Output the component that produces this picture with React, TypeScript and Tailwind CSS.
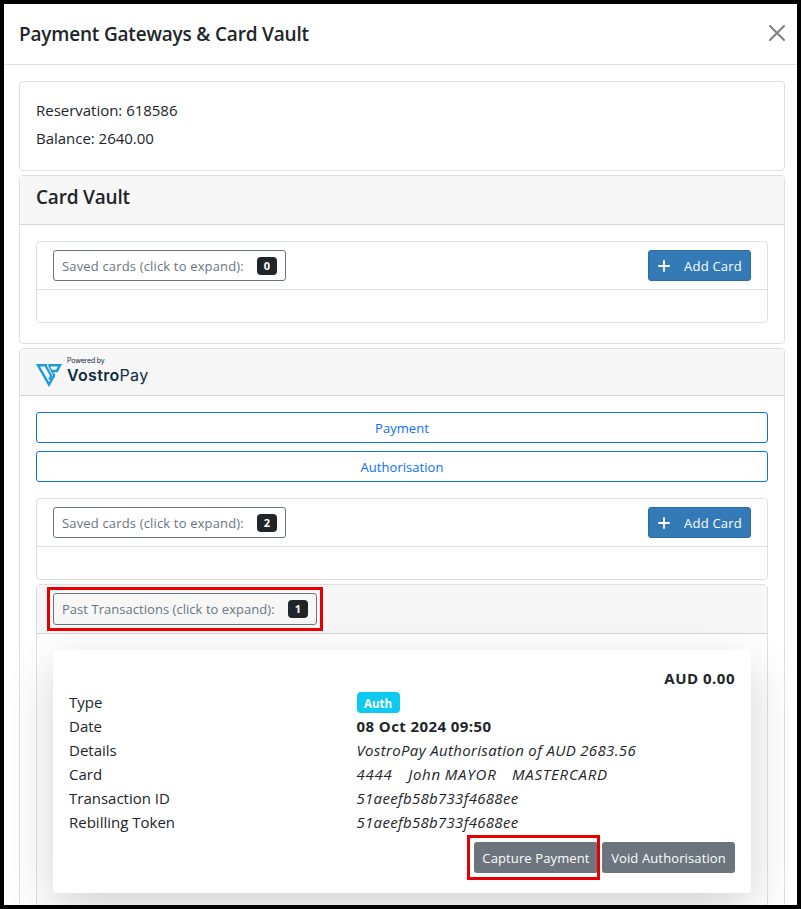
import { type ReactNode } from 'react';
import { clsx } from 'clsx';

const details = [
  { label: 'Date', value: '08 Oct 2024 09:50', style: 'font-bold tracking-[0.42px]' },
  { label: 'Details', value: 'VostroPay Authorisation of AUD 2683.56', style: 'italic tracking-[0.34px]' },
  { label: 'Card', value: '4444\u00a0\u00a0\u00a0 John MAYOR\u00a0\u00a0\u00a0 MASTERCARD', style: 'italic tracking-[0.75px] [word-spacing:-0.75px]' },
  { label: 'Transaction ID', value: '51aeefb58b733f4688ee', style: 'italic tracking-[0.3px]' },
  { label: 'Rebilling Token', value: '51aeefb58b733f4688ee', style: 'italic tracking-[0.3px]' },
];

function ExpandButton({ label, count, className }: { label: string; count: number; className?: string }) {
  return (
    <button className={clsx('flex items-center justify-between rounded-[3px] border border-[#6c757d] pl-2 pr-2 text-[13px] text-[#6c757d]', className)}>
      <span className="whitespace-nowrap">{label}</span>
      <span className="flex h-[18px] min-w-5 items-center justify-center rounded bg-[#212529] text-[11px] font-bold tracking-normal text-white">{count}</span>
    </button>
  );
}

function AddCardButton() {
  return (
    <button className="flex h-[31px] w-[103px] items-center justify-between rounded-[3px] border border-[#2e6da4] bg-[#337ab7] pl-[9px] pr-2 text-[13px] text-white">
      <svg width="12" height="12" viewBox="0 0 12 12" stroke="currentColor" strokeWidth="1.8" strokeLinecap="round">
        <path d="M6 .9v10.2M.9 6h10.2" />
      </svg>
      <span className="whitespace-nowrap tracking-[0.22px]">Add Card</span>
    </button>
  );
}

function SavedCards({ count }: { count: number }) {
  return (
    <div className="h-[82px] rounded border border-[#dedfe0]">
      <div className="flex h-12 items-center justify-between border-b border-[#dedfe0] px-4">
        <ExpandButton label="Saved cards (click to expand):" count={count} className="h-[31px] w-[233px] tracking-[0.16px]" />
        <AddCardButton />
      </div>
    </div>
  );
}

function OutlineButton({ children }: { children: ReactNode }) {
  return (
    <button className="flex h-[31px] w-full items-center justify-center rounded-[3px] border border-[#0d6efd] text-[13px] tracking-[0.04px] text-[#0d6efd]">
      {children}
    </button>
  );
}

function VostroLogo() {
  return (
    <div className="flex pt-2">
      <svg className="mt-[7px]" width="26" height="23" viewBox="0 0 26 23" fill="none" stroke="#1d9ad9" strokeWidth="2.5">
        <path d="M11.2 1.3H2L13 20.5 18.4 11" />
        <path d="M9.4 1.3 15.2 12 13.2 15.6" strokeWidth="2.2" />
        <path d="M12.4 1.3H24L20.9 6.9H15.6" />
        <path d="M12.8 1.5 17.4 10.2H19" strokeWidth="1.6" />
      </svg>
      <div className="ml-[5px] font-['Inter',sans-serif] text-[#0f2b40]">
        <div className="h-[9px] text-[7px] leading-[8px] tracking-[-0.15px]">Powered by</div>
        <div className="text-[16px] leading-[19px] tracking-[0.32px]"><span className="font-semibold">Vostro</span>Pay</div>
      </div>
    </div>
  );
}

export default function App() {
  return (
    <div className="h-[909px] w-[801px] overflow-hidden border-4 border-black bg-white font-['Open_Sans',sans-serif] text-[15px] leading-6 text-[#212529]">
      <header className="flex h-[61px] items-center justify-between border-b border-[#dee2e6] pl-[15px] pr-3">
        <h5 className="text-[19px] font-semibold tracking-[-0.19px]">Payment Gateways &amp; Card Vault</h5>
        <svg className="mb-[3px]" width="16" height="16" viewBox="0 0 16 16" stroke="#7f7f7f" strokeWidth="2" strokeLinecap="round">
          <path d="M1 1l14 14M15 1L1 15" />
        </svg>
      </header>

      <main className="flex flex-col gap-1 pl-[15px] pr-3 pt-4">
        <section className="h-[90px] rounded border border-[#dedfe0] px-4 pt-4 tracking-[-0.02px]">
          <p className="mb-1">Reservation: 618586</p>
          <p>Balance: 2640.00</p>
        </section>

        <section className="h-[169px] rounded border border-[#dedfe0]">
          <div className="h-[49px] border-b border-[#d5d6d7] bg-[#f7f7f7] px-4 pt-[9px]">
            <h5 className="text-[19px] font-semibold tracking-[-0.19px]">Card Vault</h5>
          </div>
          <div className="p-4">
            <SavedCards count={0} />
          </div>
        </section>

        <section className="h-[700px] rounded border border-[#dedfe0]">
          <div className="h-[47px] border-b border-[#d5d6d7] bg-[#f7f7f7] px-4">
            <VostroLogo />
          </div>
          <div className="px-4 pt-4">
            <div className="mb-4 flex flex-col gap-2">
              <OutlineButton>Payment</OutlineButton>
              <OutlineButton>Authorisation</OutlineButton>
            </div>
            <SavedCards count={2} />

            <div className="mt-1 h-[400px] rounded border border-[#dedfe0]">
              <div className="flex h-[49px] items-center border-b border-[#d5d6d7] bg-[#f7f7f7] pl-4">
                <div className="-ml-1.5 border-[3px] border-[#e80000] p-[3px]">
                  <ExpandButton label="Past Transactions (click to expand):" count={1} className="h-8 w-[264px] tracking-[0.04px]" />
                </div>
              </div>

              <div className="px-4 pt-4">
                <div className="h-[243px] rounded bg-white p-4 shadow-[0_16px_48px_rgba(0,0,0,0.175)]">
                  <div className="text-right font-bold tracking-[0.5px]">AUD 0.00</div>
                  <div className="grid grid-cols-[287.5px_1fr] whitespace-pre">
                    <span>Type</span>
                    <span className="mt-0.5 flex h-[21px] w-[43px] items-center justify-center rounded bg-[#0dcaf0] pt-0.5 text-[11.5px] font-bold text-white">Auth</span>
                    {details.map((row) => (
                      <div key={row.label} className="contents">
                        <span>{row.label}</span>
                        <span className={row.style}>{row.value}</span>
                      </div>
                    ))}
                  </div>
                  <div className="mt-2 flex justify-end gap-1 text-[13px] tracking-[0.12px] text-white">
                    <div className="relative">
                      <button className="h-[31px] w-[124px] rounded-[3px] bg-[#6c757d]">Capture Payment</button>
                      <div className="pointer-events-none absolute -left-[7px] -top-[7px] h-[45px] w-[133px] border-[3px] border-[#e80000]" />
                    </div>
                    <button className="h-[31px] w-[133px] rounded-[3px] bg-[#6c757d]">Void Authorisation</button>
                  </div>
                </div>
              </div>
            </div>
          </div>
        </section>
      </main>
    </div>
  );
}
